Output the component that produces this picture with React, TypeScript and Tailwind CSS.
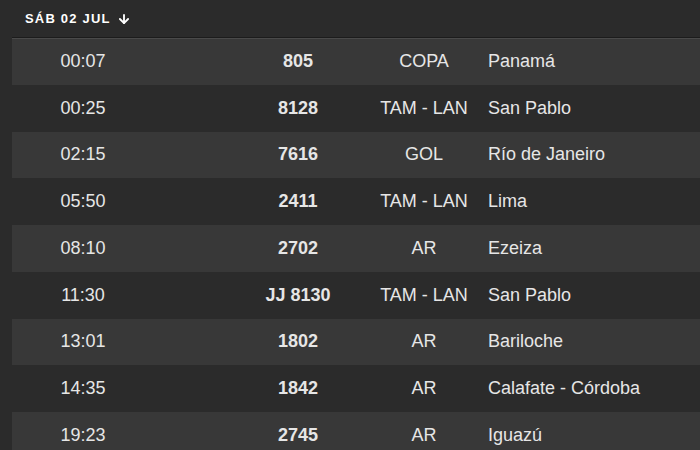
import { ArrowDown } from "lucide-react";

type Flight = {
  time: string;
  number: string;
  airline: string;
  destination: string;
};

const flights: Flight[] = [
  { time: "00:07", number: "805", airline: "COPA", destination: "Panamá" },
  { time: "00:25", number: "8128", airline: "TAM - LAN", destination: "San Pablo" },
  { time: "02:15", number: "7616", airline: "GOL", destination: "Río de Janeiro" },
  { time: "05:50", number: "2411", airline: "TAM - LAN", destination: "Lima" },
  { time: "08:10", number: "2702", airline: "AR", destination: "Ezeiza" },
  { time: "11:30", number: "JJ 8130", airline: "TAM - LAN", destination: "San Pablo" },
  { time: "13:01", number: "1802", airline: "AR", destination: "Bariloche" },
  { time: "14:35", number: "1842", airline: "AR", destination: "Calafate - Córdoba" },
  { time: "19:23", number: "2745", airline: "AR", destination: "Iguazú" },
];

export default function App() {
  return (
    <main className="w-[700px] h-[450px] overflow-hidden bg-[#2b2b2b] text-[#e6e6e6] font-['Liberation_Sans',Arial,sans-serif]">
      {/* Day header */}
      <div className="h-[37px] flex items-center pl-[25px]">
        <span className="text-[13px] font-bold tracking-[1.2px] text-white">SÁB 02 JUL</span>
        <ArrowDown className="w-[14px] h-[14px] ml-[6px] text-white" strokeWidth={3.2} />
      </div>

      {/* Flights */}
      <div className="ml-[12px] border-t border-[#1c1c1c]">
        {flights.map((f, i) => (
          <div
            key={f.time}
            className={`flex items-center h-[46.75px] text-[18px] ${
              i % 2 === 0 ? "bg-[#383838]" : "bg-[#2b2b2b]"
            } ${i === 0 ? "border-t border-[#4a4a4a]" : ""}`}
          >
            <div className="w-[142px] text-center">{f.time}</div>
            <div className="w-[144px] ml-[72px] text-center font-bold">{f.number}</div>
            <div className="w-[108px] text-center">{f.airline}</div>
            <div className="pl-[10px]">{f.destination}</div>
          </div>
        ))}
      </div>
    </main>
  );
}
